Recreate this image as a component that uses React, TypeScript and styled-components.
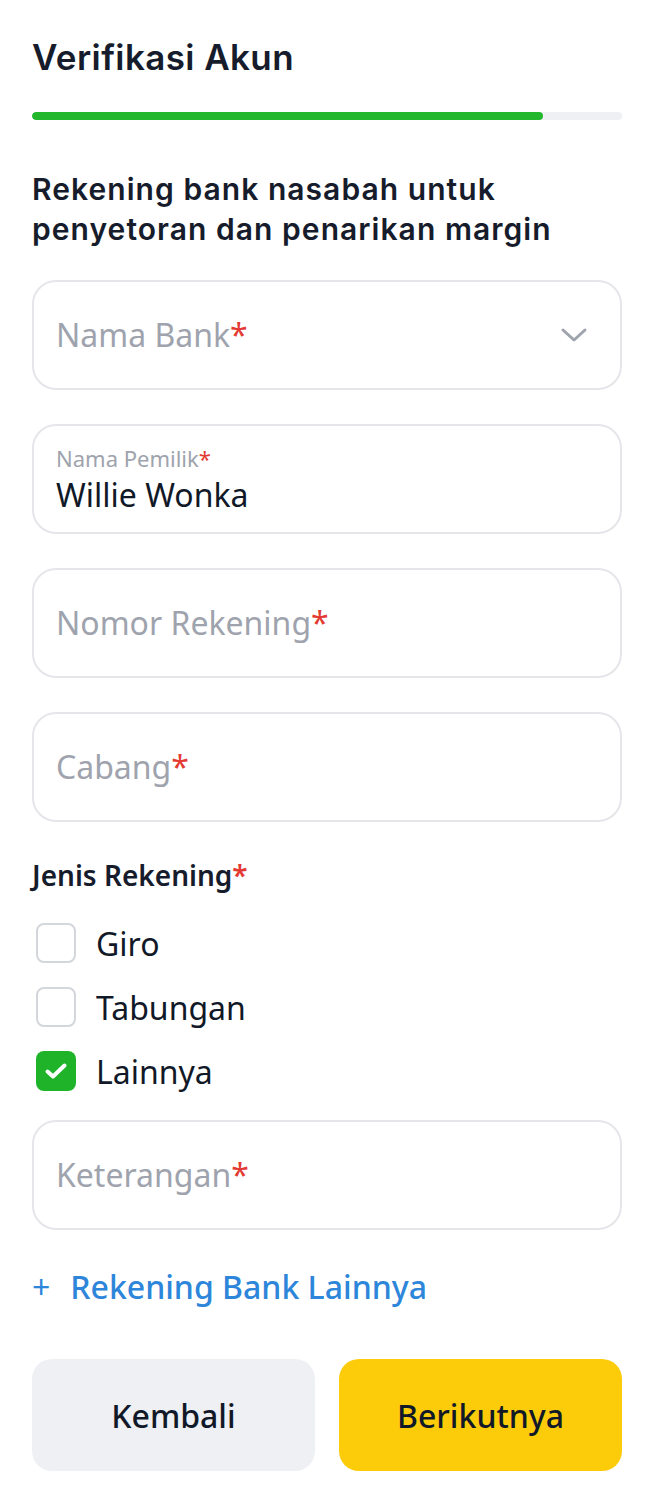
import React from "react";
import styled, { createGlobalStyle } from "styled-components";

const GlobalStyle = createGlobalStyle`
  * { box-sizing: border-box; }
  html, body { margin: 0; padding: 0; background: #ffffff; }
  body { font-family: "Noto Sans", "Open Sans", sans-serif; color: #111827; }
`;

const Page = styled.div`
  width: 654px;
  padding: 37px 32px 32px;
  display: flex;
  flex-direction: column;
`;

const Title = styled.h1`
  margin: 0;
  font-family: Inter, "Noto Sans", sans-serif;
  font-weight: 600;
  font-size: 35px;
  line-height: 40px;
  letter-spacing: 0.4px;
  color: #161c2b;
`;

const Track = styled.div`
  margin-top: 35px;
  height: 8px;
  border-radius: 4px;
  background: #eef0f3;
  overflow: hidden;
`;

const Fill = styled.div`
  height: 100%;
  border-radius: 4px;
  background: #22b72d;
`;

const Subtitle = styled.h2`
  margin: 49px 0 31px;
  font-family: Inter, "Noto Sans", sans-serif;
  font-weight: 600;
  font-size: 30px;
  line-height: 40px;
  letter-spacing: 1.05px;
  color: #161c2b;
`;

const Fields = styled.div`
  display: flex;
  flex-direction: column;
  gap: 34px;
`;

const Field = styled.div`
  height: 110px;
  border: 2px solid #e4e6ea;
  border-radius: 24px;
  padding: 0 22px;
  display: flex;
  align-items: center;
  justify-content: space-between;
`;

const FilledField = styled(Field)`
  flex-direction: column;
  align-items: flex-start;
  justify-content: flex-start;
  padding-top: 17px;
`;

const Placeholder = styled.span`
  font-size: 32px;
  line-height: 44px;
  color: #9ea3ad;
`;

const Star = styled.span`
  color: #e33a34;
`;

const SmallLabel = styled.span`
  font-size: 22px;
  line-height: 30px;
  color: #9ea3ad;
`;

const Value = styled.span`
  font-size: 32px;
  line-height: 44px;
  color: #111827;
`;

const Chevron = styled.svg`
  width: 28px;
  height: 28px;
  margin-right: 10px;
`;

const GroupLabel = styled.div`
  margin-top: 35px;
  font-size: 28px;
  line-height: 36px;
  font-weight: 600;
  color: #161c2b;
`;

const Options = styled.div`
  margin-top: 26px;
  display: flex;
  flex-direction: column;
  gap: 16px;
`;

const OptionRow = styled.label`
  height: 48px;
  display: flex;
  align-items: center;
  gap: 20px;
  padding-left: 4px;
  font-size: 32px;
  color: #111827;
`;

const Box = styled.span<{ $checked?: boolean }>`
  width: 40px;
  height: 40px;
  border-radius: 8px;
  border: ${(p) => (p.$checked ? "none" : "2px solid #d3d6db")};
  background: ${(p) => (p.$checked ? "#1fb32a" : "#ffffff")};
  display: flex;
  align-items: center;
  justify-content: center;
`;

const LastField = styled(Field)`
  margin-top: 25px;
`;

const AddLink = styled.div`
  margin-top: 35px;
  display: flex;
  align-items: center;
  font-size: 32px;
  line-height: 44px;
  font-weight: 500;
  color: #2d86da;
`;

const Plus = styled.span`
  font-weight: 400;
  margin-right: 20px;
`;

const Buttons = styled.div`
  margin-top: 50px;
  display: grid;
  grid-template-columns: 1fr 1fr;
  gap: 24px;
`;

const Button = styled.button<{ $primary?: boolean }>`
  height: 112px;
  border: none;
  border-radius: 20px;
  font-family: "Noto Sans", sans-serif;
  font-size: 32px;
  font-weight: 500;
  color: #111827;
  background: ${(p) => (p.$primary ? "#fccc0a" : "#eef0f4")};
`;

const Check = () => (
  <svg width="40" height="40" viewBox="0 0 40 40" fill="none">
    <path d="M11.5 20.5L17 25.5L28.5 14.5" stroke="#fff" strokeWidth="4" strokeLinecap="round" strokeLinejoin="round" />
  </svg>
);

const options = [
  { label: "Giro", checked: false },
  { label: "Tabungan", checked: false },
  { label: "Lainnya", checked: true },
];

export default function App() {
  return (
    <>
      <GlobalStyle />
      <Page>
        <Title>Verifikasi Akun</Title>
        <Track>
          <Fill style={{ width: "86.6%" }} />
        </Track>
        <Subtitle>
          Rekening bank nasabah untuk
          <br />
          penyetoran dan penarikan margin
        </Subtitle>
        <Fields>
          <Field>
            <Placeholder>
              Nama Bank<Star>*</Star>
            </Placeholder>
            <Chevron viewBox="0 0 28 28" fill="none">
              <path d="M3 9l11 10 11-10" stroke="#9ea3ad" strokeWidth="3" strokeLinecap="round" strokeLinejoin="round" />
            </Chevron>
          </Field>
          <FilledField>
            <SmallLabel>
              Nama Pemilik<Star>*</Star>
            </SmallLabel>
            <Value>Willie Wonka</Value>
          </FilledField>
          <Field>
            <Placeholder>
              Nomor Rekening<Star>*</Star>
            </Placeholder>
          </Field>
          <Field>
            <Placeholder>
              Cabang<Star>*</Star>
            </Placeholder>
          </Field>
        </Fields>
        <GroupLabel>
          Jenis Rekening<Star>*</Star>
        </GroupLabel>
        <Options>
          {options.map((o) => (
            <OptionRow key={o.label}>
              <Box $checked={o.checked}>{o.checked && <Check />}</Box>
              {o.label}
            </OptionRow>
          ))}
        </Options>
        <LastField>
          <Placeholder>
            Keterangan<Star>*</Star>
          </Placeholder>
        </LastField>
        <AddLink>
          <Plus>+</Plus>Rekening Bank Lainnya
        </AddLink>
        <Buttons>
          <Button>Kembali</Button>
          <Button $primary>Berikutnya</Button>
        </Buttons>
      </Page>
    </>
  );
}
